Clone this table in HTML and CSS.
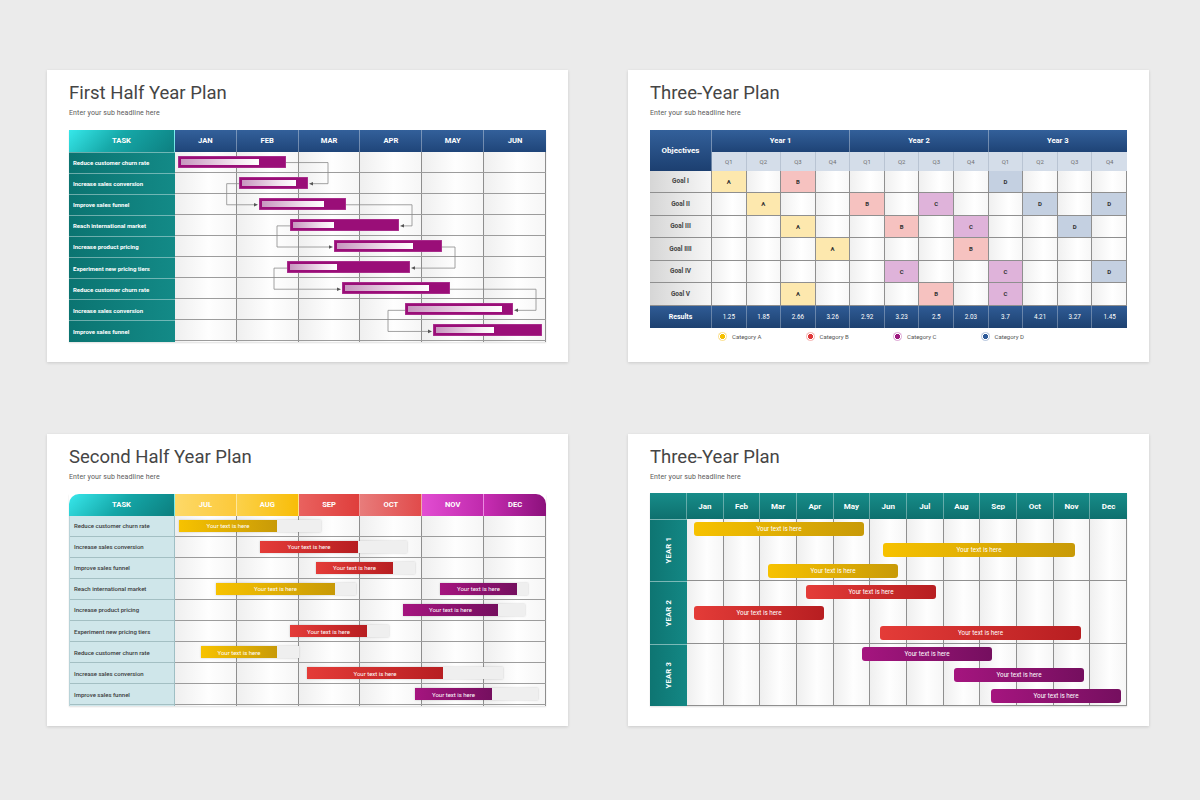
FILE: index.html
```html
<!DOCTYPE html>
<html lang="en">
<head>
<meta charset="utf-8">
<title>Plans</title>
<link rel="stylesheet" href="styles.css">
</head>
<body>
<main class="board">

  <!-- First Half Year Plan -->
  <section class="slide">
    <h1 class="title">First Half Year Plan</h1>
    <p class="sub">Enter your sub headline here</p>
    <div class="gantt">
      <div class="ghead">
        <div class="gh task-h">TASK</div>
        <div class="gh mh">JAN</div><div class="gh mh">FEB</div><div class="gh mh">MAR</div>
        <div class="gh mh">APR</div><div class="gh mh">MAY</div><div class="gh mh last">JUN</div>
      </div>
      <div class="gbody">
        <div class="tasks teal">
          <div class="tk">Reduce customer churn rate</div>
          <div class="tk">Increase sales conversion</div>
          <div class="tk">Improve sales funnel</div>
          <div class="tk">Reach international market</div>
          <div class="tk">Increase product pricing</div>
          <div class="tk">Experiment new pricing tiers</div>
          <div class="tk">Reduce customer churn rate</div>
          <div class="tk">Increase sales conversion</div>
          <div class="tk">Improve sales funnel</div>
        </div>
        <div class="timeline">
          <div class="cols"><i></i><i></i><i></i><i></i><i></i><i></i></div>
          <div class="lanes">
            <div class="lane"><span class="pbar" style="margin-left:3px;width:108px"><b style="width:78px"></b></span></div>
            <div class="lane"><span class="pbar" style="margin-left:64px;width:69px"><b style="width:54px"></b></span></div>
            <div class="lane"><span class="pbar" style="margin-left:84px;width:87px"><b style="width:62px"></b></span></div>
            <div class="lane"><span class="pbar" style="margin-left:115px;width:109px"><b style="width:41px"></b></span></div>
            <div class="lane"><span class="pbar" style="margin-left:159px;width:108px"><b style="width:76px"></b></span></div>
            <div class="lane"><span class="pbar" style="margin-left:112px;width:123px"><b style="width:47px"></b></span></div>
            <div class="lane"><span class="pbar" style="margin-left:167px;width:108px"><b style="width:84px"></b></span></div>
            <div class="lane"><span class="pbar" style="margin-left:230px;width:108px"><b style="width:94px"></b></span></div>
            <div class="lane"><span class="pbar" style="margin-left:258px;width:109px"><b style="width:58px"></b></span></div>
          </div>
          <svg class="links" viewBox="0 0 371 190" preserveAspectRatio="none">
            <g fill="none" stroke="#8c8c8c" stroke-width="0.8">
              <path d="M111 10.56 H153 V31.67 H138"/>
              <path d="M64 31.67 H51.7 V52.78 H79"/>
              <path d="M171 52.78 H237 V73.89 H229"/>
              <path d="M115 73.89 H102 V95 H154"/>
              <path d="M267 95 H280 V116.11 H240"/>
              <path d="M112 116.11 H99 V137.22 H162"/>
              <path d="M275 137.22 H361 V158.33 H343"/>
              <path d="M230 158.33 H213 V179.44 H253"/>
            </g>
            <g fill="#555">
              <polygon points="134,31.67 138,29.9 138,33.4"/>
              <polygon points="83,52.78 79,51 79,54.5"/>
              <polygon points="225,73.89 229,72.1 229,75.6"/>
              <polygon points="158,95 154,93.2 154,96.7"/>
              <polygon points="236,116.11 240,114.3 240,117.8"/>
              <polygon points="166,137.22 162,135.4 162,138.9"/>
              <polygon points="339,158.33 343,156.5 343,160"/>
              <polygon points="257,179.44 253,177.6 253,181.2"/>
            </g>
          </svg>
        </div>
      </div>
    </div>
  </section>

  <!-- Three-Year Plan (matrix) -->
  <section class="slide">
    <h1 class="title">Three-Year Plan</h1>
    <p class="sub">Enter your sub headline here</p>
    <div class="ytable">
      <div class="yh obj">Objectives</div>
      <div class="yh yr">Year 1</div><div class="yh yr">Year 2</div><div class="yh yr last">Year 3</div>
      <div class="q">Q1</div><div class="q">Q2</div><div class="q">Q3</div><div class="q">Q4</div>
      <div class="q">Q1</div><div class="q">Q2</div><div class="q">Q3</div><div class="q">Q4</div>
      <div class="q">Q1</div><div class="q">Q2</div><div class="q">Q3</div><div class="q last">Q4</div>

      <div class="goal">Goal I</div>
      <div class="d ca">A</div><div class="d"></div><div class="d cb">B</div><div class="d"></div>
      <div class="d"></div><div class="d"></div><div class="d"></div><div class="d"></div>
      <div class="d cd">D</div><div class="d"></div><div class="d"></div><div class="d"></div>

      <div class="goal">Goal II</div>
      <div class="d"></div><div class="d ca">A</div><div class="d"></div><div class="d"></div>
      <div class="d cb">B</div><div class="d"></div><div class="d cc">C</div><div class="d"></div>
      <div class="d"></div><div class="d cd">D</div><div class="d"></div><div class="d cd">D</div>

      <div class="goal">Goal III</div>
      <div class="d"></div><div class="d"></div><div class="d ca">A</div><div class="d"></div>
      <div class="d"></div><div class="d cb">B</div><div class="d"></div><div class="d cc">C</div>
      <div class="d"></div><div class="d"></div><div class="d cd">D</div><div class="d"></div>

      <div class="goal">Goal IIII</div>
      <div class="d"></div><div class="d"></div><div class="d"></div><div class="d ca">A</div>
      <div class="d"></div><div class="d"></div><div class="d"></div><div class="d cb">B</div>
      <div class="d"></div><div class="d"></div><div class="d"></div><div class="d"></div>

      <div class="goal">Goal IV</div>
      <div class="d"></div><div class="d"></div><div class="d"></div><div class="d"></div>
      <div class="d"></div><div class="d cc">C</div><div class="d"></div><div class="d"></div>
      <div class="d cc">C</div><div class="d"></div><div class="d"></div><div class="d cd">D</div>

      <div class="goal">Goal V</div>
      <div class="d"></div><div class="d"></div><div class="d ca">A</div><div class="d"></div>
      <div class="d"></div><div class="d"></div><div class="d cb">B</div><div class="d"></div>
      <div class="d cc">C</div><div class="d"></div><div class="d"></div><div class="d"></div>

      <div class="res lbl">Results</div>
      <div class="res">1.25</div><div class="res">1.85</div><div class="res">2.66</div><div class="res">3.26</div>
      <div class="res">2.92</div><div class="res">3.23</div><div class="res">2.5</div><div class="res">2.03</div>
      <div class="res">3.7</div><div class="res">4.21</div><div class="res">3.27</div><div class="res last">1.45</div>
    </div>
    <div class="legend">
      <div class="lg"><span class="dot da"></span>Category A</div>
      <div class="lg"><span class="dot db"></span>Category B</div>
      <div class="lg"><span class="dot dc"></span>Category C</div>
      <div class="lg"><span class="dot dd"></span>Category D</div>
    </div>
  </section>

  <!-- Second Half Year Plan -->
  <section class="slide">
    <h1 class="title">Second Half Year Plan</h1>
    <p class="sub">Enter your sub headline here</p>
    <div class="gantt">
      <div class="ghead">
        <div class="gh task-h2">TASK</div>
        <div class="gh jul">JUL</div><div class="gh aug">AUG</div><div class="gh sep">SEP</div>
        <div class="gh oct">OCT</div><div class="gh nov">NOV</div><div class="gh dec last">DEC</div>
      </div>
      <div class="gbody">
        <div class="tasks light">
          <div class="tk">Reduce customer churn rate</div>
          <div class="tk">Increase sales conversion</div>
          <div class="tk">Improve sales funnel</div>
          <div class="tk">Reach international market</div>
          <div class="tk">Increase product pricing</div>
          <div class="tk">Experiment new pricing tiers</div>
          <div class="tk">Reduce customer churn rate</div>
          <div class="tk">Increase sales conversion</div>
          <div class="tk">Improve sales funnel</div>
        </div>
        <div class="timeline">
          <div class="cols"><i></i><i></i><i></i><i></i><i></i><i></i></div>
          <div class="lanes">
            <div class="lane"><span class="track" style="margin-left:4px;width:142px"><span class="fill fy" style="width:98px">Your text is here</span></span></div>
            <div class="lane"><span class="track" style="margin-left:85px;width:147px"><span class="fill fr" style="width:98px">Your text is here</span></span></div>
            <div class="lane"><span class="track" style="margin-left:141px;width:99px"><span class="fill fr" style="width:77px">Your text is here</span></span></div>
            <div class="lane">
              <span class="track" style="margin-left:41px;width:140px"><span class="fill fy" style="width:119px">Your text is here</span></span>
              <span class="track" style="margin-left:84px;width:88px"><span class="fill fp" style="width:77px">Your text is here</span></span>
            </div>
            <div class="lane"><span class="track" style="margin-left:228px;width:122px"><span class="fill fp" style="width:95px">Your text is here</span></span></div>
            <div class="lane"><span class="track" style="margin-left:115px;width:99px"><span class="fill fr" style="width:77px">Your text is here</span></span></div>
            <div class="lane"><span class="track" style="margin-left:26px;width:98px"><span class="fill fy" style="width:76px">Your text is here</span></span></div>
            <div class="lane"><span class="track" style="margin-left:132px;width:196px"><span class="fill fr" style="width:136px">Your text is here</span></span></div>
            <div class="lane"><span class="track" style="margin-left:240px;width:123px"><span class="fill fp" style="width:77px">Your text is here</span></span></div>
          </div>
        </div>
      </div>
    </div>
  </section>

  <!-- Three-Year Plan (timeline) -->
  <section class="slide">
    <h1 class="title">Three-Year Plan</h1>
    <p class="sub">Enter your sub headline here</p>
    <div class="ygantt">
      <div class="yghead">
        <div></div>
        <div>Jan</div><div>Feb</div><div>Mar</div><div>Apr</div><div>May</div><div>Jun</div>
        <div>Jul</div><div>Aug</div><div>Sep</div><div>Oct</div><div>Nov</div><div class="last">Dec</div>
      </div>
      <div class="yrow">
        <div class="ylabel"><span>YEAR 1</span></div>
        <div class="ytl">
          <div class="cols12"><i></i><i></i><i></i><i></i><i></i><i></i><i></i><i></i><i></i><i></i><i></i><i></i></div>
          <div class="ylanes">
            <div class="ylane"><span class="rbar fy" style="margin-left:7px;width:170px">Your text is here</span></div>
            <div class="ylane"><span class="rbar fy" style="margin-left:196px;width:192px">Your text is here</span></div>
            <div class="ylane"><span class="rbar fy" style="margin-left:81px;width:130px">Your text is here</span></div>
          </div>
        </div>
      </div>
      <div class="yrow">
        <div class="ylabel"><span>YEAR 2</span></div>
        <div class="ytl">
          <div class="cols12"><i></i><i></i><i></i><i></i><i></i><i></i><i></i><i></i><i></i><i></i><i></i><i></i></div>
          <div class="ylanes">
            <div class="ylane"><span class="rbar fr" style="margin-left:119px;width:130px">Your text is here</span></div>
            <div class="ylane"><span class="rbar fr" style="margin-left:7px;width:130px">Your text is here</span></div>
            <div class="ylane"><span class="rbar fr" style="margin-left:193px;width:201px">Your text is here</span></div>
          </div>
        </div>
      </div>
      <div class="yrow">
        <div class="ylabel"><span>YEAR 3</span></div>
        <div class="ytl">
          <div class="cols12"><i></i><i></i><i></i><i></i><i></i><i></i><i></i><i></i><i></i><i></i><i></i><i></i></div>
          <div class="ylanes">
            <div class="ylane"><span class="rbar fp" style="margin-left:175px;width:130px">Your text is here</span></div>
            <div class="ylane"><span class="rbar fp" style="margin-left:267px;width:130px">Your text is here</span></div>
            <div class="ylane"><span class="rbar fp" style="margin-left:304px;width:130px">Your text is here</span></div>
          </div>
        </div>
      </div>
    </div>
  </section>

</main>
</body>
</html>
```

FILE: styles.css
```css
* { box-sizing: border-box; margin: 0; padding: 0; }
html, body { background: #ebebeb; }
body { font-family: Roboto, "Liberation Sans", sans-serif; width: 1200px; height: 800px; overflow: hidden; }

.board {
  display: grid;
  grid-template-columns: 521px 521px;
  grid-template-rows: 292px 292px;
  column-gap: 60px;
  row-gap: 72px;
  padding: 70px 0 0 47px;
}

.slide {
  background: #fff;
  box-shadow: 0 1px 3px rgba(0,0,0,.14);
  padding: 14px 22px 0;
}

.title { font-size: 18.5px; font-weight: 400; line-height: 19px; color: #454545; }
.sub { font-size: 7px; line-height: 8px; color: #5a5a5a; margin-top: 6px; letter-spacing: .1px; }

/* ---------- half-year gantt ---------- */
.gantt { margin-top: 12.5px; width: 477px; box-shadow: 0 1px 1.5px rgba(0,0,0,.12); }
.ghead { display: grid; grid-template-columns: 106px repeat(6, 1fr); height: 22px; }
.gh {
  display: flex; align-items: center; justify-content: center;
  color: #fff; font-weight: 700; font-size: 7.6px;
  border-right: 1px solid rgba(255,255,255,.35);
}
.gh.last { border-right: none; }
.task-h { background: linear-gradient(135deg, #36e8ea 0%, #16a8a8 45%, #0d7f80 100%); }
.mh { background: linear-gradient(180deg, #33609a, #1f4579); }

.gbody { display: grid; grid-template-columns: 106px 1fr; height: 190px; }
.tasks { display: flex; flex-direction: column; }
.tk {
  flex: 1; display: flex; align-items: center; padding-left: 4px;
  font-size: 6px; white-space: nowrap;
}
.tasks.teal { background: linear-gradient(90deg, #0b7471, #138a87); }
.tasks.teal .tk { color: #fff; font-weight: 700; border-top: 1px solid rgba(255,255,255,.4); }
.tasks.light { background: #cfe6ea; border-right: 1px solid #9fbfc4; border-left: 1px solid #b8d3d8; }
.tasks.light .tk { color: #3a3a3a; font-weight: 500; border-bottom: 1px solid #a3bfc3; }

.timeline { display: grid; }
.timeline > * { grid-area: 1 / 1; }
.cols { display: grid; grid-template-columns: repeat(6, 1fr); }
.cols i {
  border-right: 1px solid #8e8e8e;
  background: linear-gradient(90deg, #efefef, #fefefe 55%, #f6f6f6);
}
.lanes { display: flex; flex-direction: column; }
.lane {
  flex: 1; display: flex; align-items: center;
  border-bottom: 1px solid #9c9c9c;
}
.links { width: 100%; height: 100%; display: block; }

.pbar {
  display: block; height: 12px; padding: 3px 0 0 3px;
  background: #9a0e78;
  box-shadow: 0 0 0 0.5px #b54a9d inset;
}
.pbar b {
  display: block; height: 6px;
  background: linear-gradient(90deg, #c796bf, #f3e6f0 70%, #fff);
}

/* second half header */
.task-h2 { border-top-left-radius: 10px; background: linear-gradient(135deg, #38e8ec 0%, #14a6a7 50%, #0c7e7e 100%); }
.jul { background: linear-gradient(90deg, #fdd968, #fcc93a); }
.aug { background: linear-gradient(90deg, #fcd14a, #f8bd08); }
.sep { background: linear-gradient(90deg, #e9625f, #df3e3c); }
.oct { background: linear-gradient(90deg, #e87c7b, #e14b4b); }
.nov { background: linear-gradient(90deg, #e24dd2, #c02aad); }
.dec { background: linear-gradient(90deg, #c82db3, #8c117c); border-top-right-radius: 10px; }

.track {
  display: flex; height: 12px; background: #efefef;
  box-shadow: 0 0 2px rgba(0,0,0,.2);
  flex: none;
}
.fill {
  display: flex; align-items: center; justify-content: center;
  height: 100%; color: #fff; font-size: 6px; white-space: nowrap;
}
.fy { background: linear-gradient(90deg, #f7c200, #c89a08); }
.fr { background: linear-gradient(90deg, #e43c38, #b71e21); }
.fp { background: linear-gradient(90deg, #a5157f, #750f5f); }

/* ---------- three-year matrix ---------- */
.ytable {
  margin-top: 12.5px; width: 477px;
  display: grid;
  grid-template-columns: 62px repeat(12, 1fr);
  grid-template-rows: 22px 19px repeat(6, 22.5px) 22px;
}
.ytable > div { display: flex; align-items: center; justify-content: center; }
.yh {
  background: linear-gradient(180deg, #33609a, #1e4376);
  color: #fff; font-weight: 700; font-size: 7.6px;
  border-right: 1px solid rgba(255,255,255,.35);
}
.yh.last { border-right: none; }
.obj { grid-row: span 2; font-size: 8px; background: linear-gradient(180deg, #33609a, #1c3f70); }
.yr { grid-column: span 4; }
.q {
  background: #d4dde9; color: #707070; font-size: 6px;
  border-right: 1px solid #b9c4d3;
}
.q.last { border-right: none; }
.goal {
  background: linear-gradient(90deg, #d6d6d6, #f7f7f7);
  color: #444; font-weight: 700; font-size: 6.5px;
  border-right: 1px solid #8f8f8f; border-bottom: 1px solid #8f8f8f;
}
.d {
  background: linear-gradient(90deg, #f0f0f0, #ffffff 60%, #f7f7f7);
  border-right: 1px solid #8f8f8f; border-bottom: 1px solid #8f8f8f;
  color: #333; font-weight: 700; font-size: 6px;
}
.d.ca { background: #fde8ae; }
.d.cb { background: #f6c2c0; }
.d.cc { background: #dfb3da; }
.d.cd { background: #c4d0e1; }
.res {
  background: linear-gradient(180deg, #2f5b95, #1d4170);
  color: #fff; font-size: 6.3px;
  border-right: 1px solid rgba(255,255,255,.3);
}
.res.last { border-right: none; }
.res.lbl { font-weight: 700; font-size: 7px; }

.legend { display: flex; align-items: center; height: 9px; margin-top: 4px; padding-left: 68px; }
.lg { width: 87.5px; flex: none; display: flex; align-items: center; gap: 5px; font-size: 6px; color: #555; }
.dot { width: 9px; height: 9px; border-radius: 50%; flex: none; }
.da { background: radial-gradient(circle, #f4c000 0 2.3px, #fff 2.8px 3.2px, #fbe39a 3.6px); }
.db { background: radial-gradient(circle, #e0383a 0 2.3px, #fff 2.8px 3.2px, #f6bfbd 3.6px); }
.dc { background: radial-gradient(circle, #9f1b80 0 2.3px, #fff 2.8px 3.2px, #e2b2db 3.6px); }
.dd { background: radial-gradient(circle, #2e5b9a 0 2.3px, #fff 2.8px 3.2px, #bfcde2 3.6px); }

/* ---------- three-year timeline ---------- */
.ygantt { margin-top: 12px; width: 477px; box-shadow: 0 1px 1.5px rgba(0,0,0,.12); }
.yghead {
  display: grid; grid-template-columns: 37px repeat(12, 1fr); height: 26px;
  background: linear-gradient(180deg, #178c89, #0e706e);
}
.yghead div {
  display: flex; align-items: center; justify-content: center;
  color: #fff; font-weight: 700; font-size: 8px;
  border-right: 1px solid rgba(255,255,255,.35);
}
.yghead div.last { border-right: none; }
.yrow { display: grid; grid-template-columns: 37px 1fr; height: 62.33px; }
.ylabel {
  display: flex; align-items: center; justify-content: center;
  background: linear-gradient(90deg, #0e7572, #138784);
  border-top: 1px solid rgba(255,255,255,.45);
}
.ylabel span {
  writing-mode: vertical-rl; transform: rotate(180deg);
  color: #fff; font-weight: 700; font-size: 7.6px; letter-spacing: .2px;
}
.ytl { display: grid; }
.ytl > * { grid-area: 1 / 1; }
.cols12 { display: grid; grid-template-columns: repeat(12, 1fr); }
.cols12 i {
  border-right: 1px solid #8f8f8f; border-bottom: 1px solid #8f8f8f;
  background: linear-gradient(90deg, #efefef, #fefefe 55%, #f6f6f6);
}
.ylanes { display: flex; flex-direction: column; }
.ylane { flex: 1; display: flex; align-items: center; }
.rbar {
  display: flex; align-items: center; justify-content: center; flex: none;
  height: 14px; border-radius: 3px;
  color: #fff; font-size: 6.3px; white-space: nowrap;
}
```
